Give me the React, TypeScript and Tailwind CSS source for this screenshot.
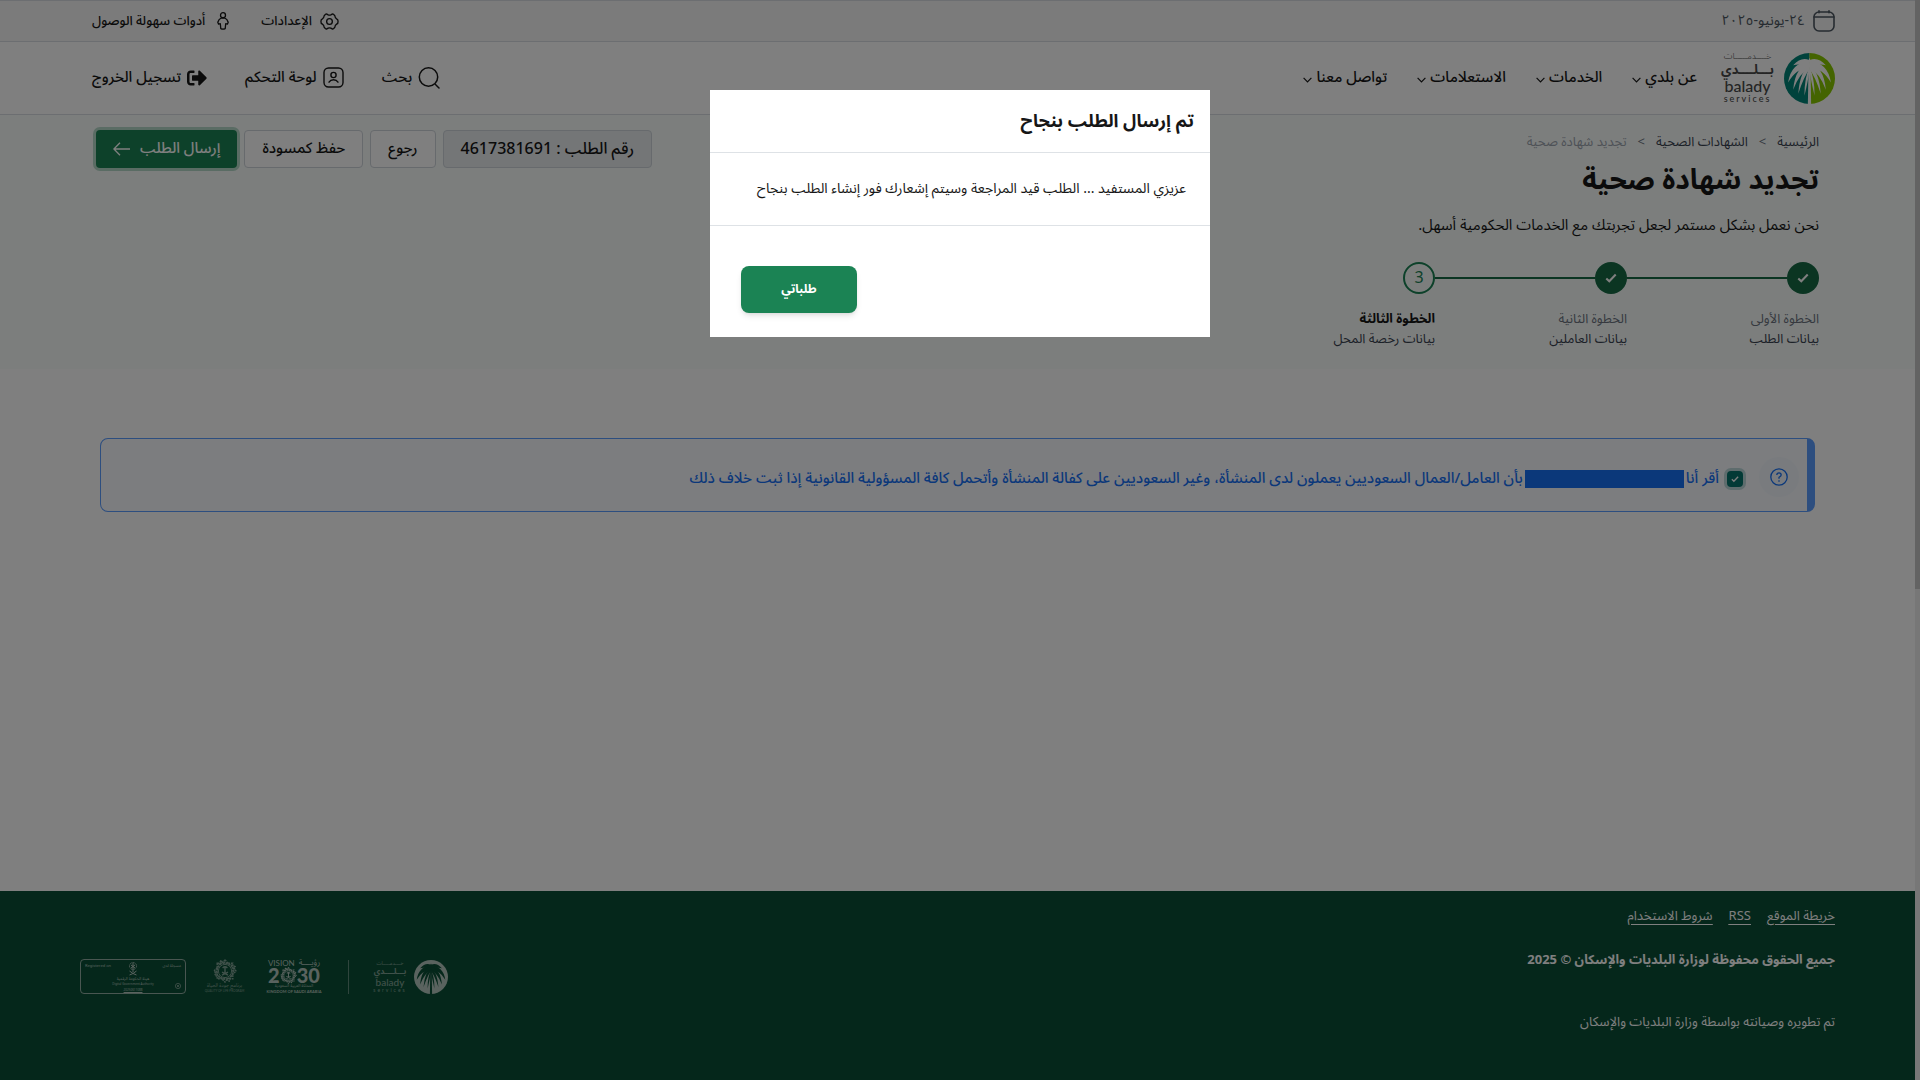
import type { ReactNode } from "react";
import { FaSignOutAlt } from "react-icons/fa";

const navItems = ["عن بلدي", "الخدمات", "الاستعلامات", "تواصل معنا"];

const steps = [
  { title: "الخطوة الأولى", text: "بيانات الطلب", done: true },
  { title: "الخطوة الثانية", text: "بيانات العاملين", done: true },
  { title: "الخطوة الثالثة", text: "بيانات رخصة المحل", done: false },
];

const fronds = [
  "M25 7 Q17 3 9 12 Q17 10 25 14Z",
  "M25 8 Q7 9 4 29 Q12 15 25 14Z",
  "M25 10 Q11 13 9 36 Q15.500 19 25 15Z",
  "M25 12 Q15.500 18 14 40 Q19.500 23 25 16Z",
  "M25 14 Q20 24 20 42 Q23.500 28 25 17Z",
];

function Palm({ left, right, leaf, className }: { left: string; right: string; leaf: string; className: string }) {
  return (
    <svg viewBox="0 0 50 50" className={className} aria-hidden="true">
      <path d="M25 0A25 25 0 0 0 25 50Z" fill={left} />
      <path d="M25 0A25 25 0 0 1 25 50Z" fill={right} />
      <g fill={leaf}>
        <path d="M25 5l2 4-4 0z" />
        <path d="M24 16h2l.600 34h-3.200z" />
        {fronds.map((d) => (
          <path key={d} d={d} />
        ))}
        <g transform="matrix(-1 0 0 1 50 0)">
          {fronds.map((d) => (
            <path key={d} d={d} />
          ))}
        </g>
      </g>
    </svg>
  );
}

function CalendarIcon() {
  return (
    <svg viewBox="0 0 22 22" className="size-[22px]" fill="none" stroke="#4d5761" strokeWidth="1.6" strokeLinecap="round" aria-hidden="true">
      <rect x="1" y="2" width="20" height="19" rx="5" />
      <path d="M1 7h20M6 .8v2M16 .8v2" />
    </svg>
  );
}

function GearIcon() {
  return (
    <svg viewBox="0 0 20 20" className="size-[19px]" fill="none" stroke="currentColor" strokeWidth="1.4" strokeLinejoin="round" aria-hidden="true">
      <circle cx="10" cy="10" r="3" />
      <path d="M7.2 2.2 8.6 3Q10 3.700 11.400 3L12.800 2.200Q13.600 1.800 14.300 2.500L15.600 4Q15.800 6.200 17.500 7.200Q19.200 8 19 10Q19.200 12 17.500 12.800Q15.800 13.800 15.600 16L14.300 17.500Q13.600 18.200 12.800 17.800L11.400 17Q10 16.300 8.600 17L7.200 17.800Q6.400 18.200 5.700 17.500L4.400 16Q4.200 13.800 2.500 12.800Q.8 12 1 10Q.8 8 2.500 7.200Q4.200 6.200 4.400 4L5.700 2.500Q6.400 1.800 7.200 2.200Z" />
    </svg>
  );
}

function PersonIcon() {
  return (
    <svg viewBox="0 0 12 18" className="h-[18px] w-3" fill="none" stroke="currentColor" strokeWidth="1.3" strokeLinejoin="round" aria-hidden="true">
      <circle cx="6" cy="3.200" r="2.500" />
      <path d="M4.200 6h3.600q2.500 1 3.400 4.200l-.8 2-1.700-.5-.5 5q-2.200 1-4.400 0l-.5-5-1.700.5-.8-2Q1.700 7 4.200 6Z" />
    </svg>
  );
}

function SearchIcon() {
  return (
    <svg viewBox="0 0 22 22" className="size-[22px]" fill="none" stroke="currentColor" strokeWidth="1.5" strokeLinecap="round" aria-hidden="true">
      <circle cx="10.500" cy="10" r="9.200" />
      <path d="m17.500 17.500 3.500 3.500" />
    </svg>
  );
}

function UserSquareIcon() {
  return (
    <svg viewBox="0 0 21 21" className="size-[21px]" fill="none" stroke="currentColor" strokeWidth="1.4" strokeLinecap="round" aria-hidden="true">
      <rect x="1" y="1" width="19" height="19" rx="4.500" />
      <circle cx="10.500" cy="8" r="2.600" />
      <path d="M6 15.200q1.500-2.400 4.500-2.400t4.500 2.400" />
    </svg>
  );
}

function Chevron() {
  return (
    <svg viewBox="0 0 9 6" className="mt-1 h-1.5 w-[9px]" fill="none" stroke="currentColor" strokeWidth="1.2" aria-hidden="true">
      <path d="m.6.8 3.900 4 3.900-4" />
    </svg>
  );
}

function Check({ className }: { className: string }) {
  return (
    <svg viewBox="0 0 14 11" className={className} fill="none" stroke="#fff" strokeWidth="2.4" aria-hidden="true">
      <path d="m1.500 6 3.500 3.300L12.500 1.500" />
    </svg>
  );
}

function Star({ className }: { className: string }) {
  return (
    <svg viewBox="2 2 20 20" className={className} fill="none" stroke="currentColor" strokeWidth="1.2" aria-hidden="true">
      <g strokeDasharray="1.600 .7">
        <rect x="5.500" y="5.500" width="13" height="13" />
        <rect x="5.500" y="5.500" width="13" height="13" transform="rotate(45 12 12)" />
        <rect x="5.500" y="5.500" width="13" height="13" transform="rotate(22 12 12)" />
      </g>
      <circle cx="12" cy="12" r="5.500" strokeWidth=".8" />
      <path d="M12 8.500v5M10 9.500q2-2 4 0M9.500 15.500l5-2.500M14.500 15.500l-5-2.500" />
    </svg>
  );
}

function Emblem() {
  return (
    <svg viewBox="0 0 10 14" className="h-3.5 w-2.5" fill="none" stroke="currentColor" strokeWidth="1" aria-hidden="true">
      <circle cx="5" cy="4" r="3.500" strokeDasharray="1 .6" />
      <path d="M5 1v9M3 3l4 3M7 3 3 6M1.500 9q3.500 3 7 4M8.500 9q-3.500 3-7 4" />
    </svg>
  );
}

function HeaderLink({ children, icon }: { children: ReactNode; icon: ReactNode }) {
  return (
    <a href="#" className="flex items-center gap-1.5">
      {icon}
      <span>{children}</span>
    </a>
  );
}

export default function App() {
  return (
    <div
      dir="rtl"
      className="flex min-h-screen flex-col bg-white pr-[5px] font-['Noto_Sans_Arabic','DejaVu_Sans_Condensed','Noto_Sans',sans-serif] text-sm text-[#161616]"
    >
      <div className="flex h-[42px] items-center justify-between border-y border-[#d9dce2] bg-[#f6f6f6] pr-20 pl-[92px]">
        <div className="flex items-center gap-2 text-[#4d5761]">
          <CalendarIcon />
          <time>٢٤-يونيو-٢٠٢٥</time>
        </div>
        <div className="flex items-center gap-8 text-[13px] font-medium">
          <a href="#" className="flex items-center gap-2">
            <GearIcon />
            الإعدادات
          </a>
          <a href="#" className="flex items-center gap-3">
            <PersonIcon />
            أدوات سهولة الوصول
          </a>
        </div>
      </div>

      <header className="flex h-[73px] items-center justify-between border-b border-[#d9dce2] pr-20 pl-[92px] text-[15px] font-medium">
        <div className="flex items-center">
          <a href="#" aria-label="بلدي" className="flex items-center gap-[11px]">
            <Palm left="#008578" right="#88c800" leaf="#fff" className="size-[51px]" />
            <span className="flex w-[51px] flex-col items-center text-[#4a4a4a]">
              <span className="text-[9px] leading-[10px] font-light">خــــدمـــــات</span>
              <span className="text-[13px] leading-[16px] font-bold">بـــلــــدي</span>
              <span className="font-['Lato'] text-[16px] leading-[15px] font-medium">balady</span>
              <span dir="ltr" className="font-['Lato'] text-[9px] leading-[11px] tracking-[2px]">services</span>
            </span>
          </a>
          <nav className="mr-[25px] flex items-center gap-[30px]">
            {navItems.map((item) => (
              <button key={item} type="button" className="flex items-center gap-1">
                {item}
                <Chevron />
              </button>
            ))}
          </nav>
        </div>
        <div className="flex items-center gap-[38px]">
          <HeaderLink icon={<SearchIcon />}>بحث</HeaderLink>
          <HeaderLink icon={<UserSquareIcon />}>لوحة التحكم</HeaderLink>
          <HeaderLink icon={<FaSignOutAlt className="size-5" />}>تسجيل الخروج</HeaderLink>
        </div>
      </header>

      <section className="flex items-start justify-between bg-[#f8fdfb] pt-[15px] pr-24 pb-5 pl-24">
        <div>
          <nav aria-label="مسار التنقل" className="mt-0.5 flex items-center gap-[11px] text-[13px] leading-5 text-[#384250]">
            <a href="#">الرئيسية</a>
            <span className="text-[#6c737f]">&gt;</span>
            <a href="#">الشهادات الصحية</a>
            <span className="text-[#6c737f]">&gt;</span>
            <span className="text-[#9da4ae]">تجديد شهادة صحية</span>
          </nav>
          <h1 className="mt-[9px] text-[28px] leading-10 font-bold">تجديد شهادة صحية</h1>
          <p className="mt-3 text-[15px] leading-6">نحن نعمل بشكل مستمر لجعل تجربتك مع الخدمات الحكومية أسهل.</p>
          <ol className="mt-[25px] flex">
            {steps.map((step, i) => (
              <li key={step.title} className="w-48">
                <div className="flex items-center">
                  {step.done ? (
                    <span className="flex size-8 shrink-0 items-center justify-center rounded-full bg-[#166a45]">
                      <Check className="h-2.5 w-3" />
                    </span>
                  ) : (
                    <span className="flex size-8 shrink-0 items-center justify-center rounded-full border-2 border-[#1b8354] text-base text-[#1b8354]">
                      {i + 1}
                    </span>
                  )}
                  {i < steps.length - 1 && <span className="h-0.5 flex-1 bg-[#166a45]" />}
                </div>
                <div className={step.done ? "mt-[15px] text-[13px] leading-5 text-[#6c737f]" : "mt-[15px] text-[13px] leading-5 font-bold"}>
                  {step.title}
                </div>
                <div className="text-[13px] leading-5 text-[#384250]">{step.text}</div>
              </li>
            ))}
          </ol>
        </div>
        <div className="flex items-center gap-[7px] text-[15px] font-medium">
          <span className="flex h-[38px] items-center rounded border border-[#ced4da] bg-[#e9ecef] px-[17px] text-base">رقم الطلب : 4617381691</span>
          <button type="button" className="h-[38px] rounded border border-[#ced4da] bg-white px-[17px]">رجوع</button>
          <button type="button" className="h-[38px] rounded border border-[#ced4da] bg-white px-[17px]">حفظ كمسودة</button>
          <button type="button" className="flex h-[38px] items-center gap-2.5 rounded bg-[#1b8354] px-[17px] text-white ring-3 ring-[#1b8354]/30">
            إرسال الطلب
            <svg viewBox="0 0 17 14" className="h-3.5 w-[17px]" fill="none" stroke="currentColor" strokeWidth="1.3" aria-hidden="true">
              <path d="M17 7H1M7 .8.900 7 7 13.200" />
            </svg>
          </button>
        </div>
      </section>

      <main className="flex-1 px-[100px] pt-[69px]">
        <div className="flex h-[74px] items-center rounded-lg border border-r-8 border-[#5a9cff] bg-[#f8faff] pt-1 pr-2 text-[15px] font-medium text-[#1670f5]">
          <span className="flex size-10 items-center justify-center rounded-full bg-[#f2f7fd]">
            <svg viewBox="0 0 18 18" className="size-[18px]" fill="none" stroke="currentColor" strokeWidth="1.3" aria-hidden="true">
              <circle cx="9" cy="9" r="8.200" />
              <path d="M6.800 7q.1-2.200 2.200-2.200T11.200 7Q11.200 8.300 9 9.300v1.400M9 12.200v1.500" />
            </svg>
          </span>
          <label className="mt-1 mr-4 flex items-center">
            <span className="relative ml-2 flex size-4">
              <input
                type="checkbox"
                defaultChecked
                className="size-4 appearance-none rounded-sm bg-[#06746c] ring-3 ring-[#06746c]/25"
              />
              <Check className="pointer-events-none absolute top-1 right-1 h-2 w-2" />
            </span>
            <span>أقر أنا</span>
            <span className="mx-0.5 h-[18px] w-[159px] bg-[#1670f5]" />
            <span>بأن العامل/العمال السعوديين يعملون لدى المنشأة، وغير السعوديين على كفالة المنشأة وأتحمل كافة المسؤولية القانونية إذا ثبت خلاف ذلك</span>
          </label>
        </div>
      </main>

      <footer className="flex items-start justify-between bg-[#0a4e36] px-20 pt-[13px] pb-11 text-[13px] text-white">
        <div>
          <div className="flex gap-4 leading-6 underline underline-offset-4">
            <a href="#">خريطة الموقع</a>
            <a href="#">RSS</a>
            <a href="#">شروط الاستخدام</a>
          </div>
          <p className="mt-5 leading-6 font-bold">جميع الحقوق محفوظة لوزارة البلديات والإسكان © 2025</p>
          <p className="mt-9 leading-7">تم تطويره وصيانته بواسطة وزارة البلديات والإسكان</p>
        </div>
        <div className="mt-[55px] flex items-center gap-4 text-[#b4c6be]">
          <div className="flex items-center gap-[7px]">
            <Palm left="#b4c6be" right="#b4c6be" leaf="#0a4e36" className="size-[34px]" />
            <span className="flex w-[34px] flex-col items-center opacity-70">
              <span className="text-[5px] leading-[7px]">خــــدمـــــات</span>
              <span className="text-[8px] leading-[10px] font-bold">بـــلــــدي</span>
              <span className="font-['Lato'] text-[10px] leading-[10px] font-medium">balady</span>
              <span dir="ltr" className="font-['Lato'] text-[5px] leading-[7px] tracking-[2px]">services</span>
            </span>
          </div>
          <span className="mr-2 ml-3 h-[34px] w-px bg-[#b4c6be]/50" />
          <div className="ml-[5px] flex w-[52px] flex-col items-center">
            <div className="flex gap-1 text-[8px] leading-[8px]">
              <span>رؤيــــة</span>
              <span className="font-['Lato']">VISION</span>
            </div>
            <div dir="ltr" className="flex items-center font-['Lato'] text-[20px] leading-[17px] font-black">
              <span>2</span>
              <Star className="size-[17px]" />
              <span>30</span>
            </div>
            <span className="text-[4px] leading-[5px] whitespace-nowrap">المملكة العربية السعودية</span>
            <span className="font-['Lato'] text-[4px] leading-[5px] font-bold whitespace-nowrap">KINGDOM OF SAUDI ARABIA</span>
          </div>
          <div className="flex w-[45px] flex-col items-center opacity-70">
            <Star className="size-6" />
            <span className="text-[5px] leading-[6px] whitespace-nowrap">برنامج جودة الحياة</span>
            <span className="font-['Lato'] text-[3px] leading-[5px] whitespace-nowrap">QUALITY OF LIFE PROGRAM</span>
          </div>
          <div className="flex h-[35px] w-[106px] justify-between rounded border border-[#b4c6be]/80 px-1 text-[4px] leading-[5px]">
            <span className="flex w-6 flex-col justify-between py-1 whitespace-nowrap">
              مسجلة لدى
              <svg viewBox="0 0 6 6" className="size-1.5" fill="none" stroke="currentColor" strokeWidth=".6" aria-hidden="true">
                <circle cx="3" cy="3" r="2.600" />
                <path d="m2 2 2 2M4 2 2 4" />
              </svg>
            </span>
            <span className="flex flex-1 flex-col items-center pt-0.5 whitespace-nowrap">
              <Emblem />
              <span className="leading-[6px]">هيئة الحكومة الرقمية</span>
              <span className="text-[3px]">Digital Government Authority</span>
              <span className="text-[3px] leading-[6px] underline">20250611088</span>
            </span>
            <span dir="ltr" className="w-6 py-1 whitespace-nowrap">Registered on</span>
          </div>
        </div>
      </footer>

      <div className="fixed inset-y-0 right-0 w-[5px] bg-[#efefef]" aria-hidden="true">
        <div className="h-[589px] bg-[#c6c6c6]" />
      </div>

      <div className="fixed inset-0 flex items-start justify-center bg-black/50 pt-[90px]">
        <div role="dialog" aria-modal="true" aria-labelledby="dialog-title" className="w-[500px] bg-white">
          <div className="border-b border-[#dee2e6] px-4 py-4">
            <h2 id="dialog-title" className="text-lg leading-[30px] font-bold">تم إرسال الطلب بنجاح</h2>
          </div>
          <p className="border-b border-[#dee2e6] px-6 py-6 leading-6">
            عزيزي المستفيد ... الطلب قيد المراجعة وسيتم إشعارك فور إنشاء الطلب بنجاح
          </p>
          <div className="flex justify-end px-[31px] pt-10 pb-6">
            <button type="button" className="h-[47px] w-[116px] rounded-lg bg-[#1b8354] text-xs font-bold text-white shadow-md">
              طلباتي
            </button>
          </div>
        </div>
      </div>
    </div>
  );
}
